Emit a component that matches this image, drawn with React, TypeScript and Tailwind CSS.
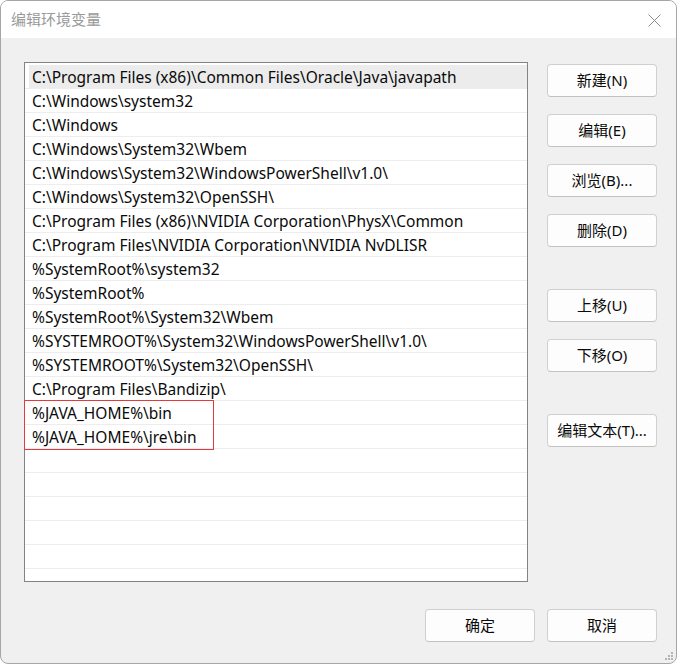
import React from "react";

const paths = [
  "C:\\Program Files (x86)\\Common Files\\Oracle\\Java\\javapath",
  "C:\\Windows\\system32",
  "C:\\Windows",
  "C:\\Windows\\System32\\Wbem",
  "C:\\Windows\\System32\\WindowsPowerShell\\v1.0\\",
  "C:\\Windows\\System32\\OpenSSH\\",
  "C:\\Program Files (x86)\\NVIDIA Corporation\\PhysX\\Common",
  "C:\\Program Files\\NVIDIA Corporation\\NVIDIA NvDLISR",
  "%SystemRoot%\\system32",
  "%SystemRoot%",
  "%SystemRoot%\\System32\\Wbem",
  "%SYSTEMROOT%\\System32\\WindowsPowerShell\\v1.0\\",
  "%SYSTEMROOT%\\System32\\OpenSSH\\",
  "C:\\Program Files\\Bandizip\\",
];

const javaPaths = ["%JAVA_HOME%\\bin", "%JAVA_HOME%\\jre\\bin"];

const font = { fontFamily: '"Noto Sans", "Noto Sans CJK SC", sans-serif' };

function Row({ text, active }: { text?: string; active?: boolean }) {
  return (
    <div className="h-[24px] border-b border-[#ededed] pl-[4px]">
      <div className={`flex h-full items-center pl-[3px] pt-[2px] ${active ? "bg-[#ececec]" : ""}`}>
        <span className="whitespace-nowrap text-[15.5px] leading-none text-[#0a0a0a]">{text}</span>
      </div>
    </div>
  );
}

function Btn({ label, className = "" }: { label: string; className?: string }) {
  return (
    <button
      className={`flex h-[33px] w-[110px] items-center justify-center rounded-[4px] border border-[#d0d0d0] border-b-[#c2c2c2] bg-[#fdfdfd] text-[15px] text-[#0a0a0a] ${className}`}
    >
      {label}
    </button>
  );
}

export default function App() {
  return (
    <div className="h-[664px] w-[677px] bg-white" style={font}>
      <div className="flex h-full w-full flex-col overflow-hidden rounded-[8px] border border-[#a6a6a6] bg-[#f0f0f0]">
        {/* Title bar */}
        <div className="flex h-[37px] shrink-0 items-center justify-between bg-white pl-[10px] pr-[15px]">
          <span className="text-[15px] text-[#9a9a9a]">编辑环境变量</span>
          <svg width="13" height="13" viewBox="0 0 13 13" className="mt-[1px]">
            <path d="M0.5 0.5 L12.5 12.5 M12.5 0.5 L0.5 12.5" stroke="#8c8c8c" strokeWidth="1" fill="none" />
          </svg>
        </div>

        {/* Body */}
        <div className="flex pl-[23px] pt-[24px]">
          <div className="h-[520px] w-[504px] border border-[#838383] bg-white pt-[2px]">
            <Row text={paths[0]} active />
            {paths.slice(1).map((p) => (
              <Row key={p} text={p} />
            ))}
            <div className="relative">
              {javaPaths.map((p) => (
                <Row key={p} text={p} />
              ))}
              <div className="pointer-events-none absolute -left-[1px] -top-[1px] h-[50px] w-[190px] border border-[#e23b3b]" />
            </div>
            {Array.from({ length: 5 }).map((_, i) => (
              <Row key={i} />
            ))}
          </div>

          <div className="ml-[19px] flex flex-col pt-[2px]">
            <Btn label="新建(N)" />
            <Btn label="编辑(E)" className="mt-[17px]" />
            <Btn label="浏览(B)..." className="mt-[17px]" />
            <Btn label="删除(D)" className="mt-[17px]" />
            <Btn label="上移(U)" className="mt-[42px]" />
            <Btn label="下移(O)" className="mt-[17px]" />
            <Btn label="编辑文本(T)..." className="mt-[42px]" />
          </div>
        </div>

        {/* Footer */}
        <div className="relative flex flex-1 justify-end gap-[12px] pr-[19px] pt-[27px]">
          <Btn label="确定" />
          <Btn label="取消" />
          <svg width="10" height="10" viewBox="0 0 10 10" className="absolute bottom-[2px] right-[2px]">
            <rect x="7" y="1" width="2" height="2" fill="#b4b4b4" />
            <rect x="4" y="4" width="2" height="2" fill="#b4b4b4" />
            <rect x="7" y="4" width="2" height="2" fill="#b4b4b4" />
            <rect x="1" y="7" width="2" height="2" fill="#b4b4b4" />
            <rect x="4" y="7" width="2" height="2" fill="#b4b4b4" />
            <rect x="7" y="7" width="2" height="2" fill="#b4b4b4" />
          </svg>
        </div>
      </div>
    </div>
  );
}
